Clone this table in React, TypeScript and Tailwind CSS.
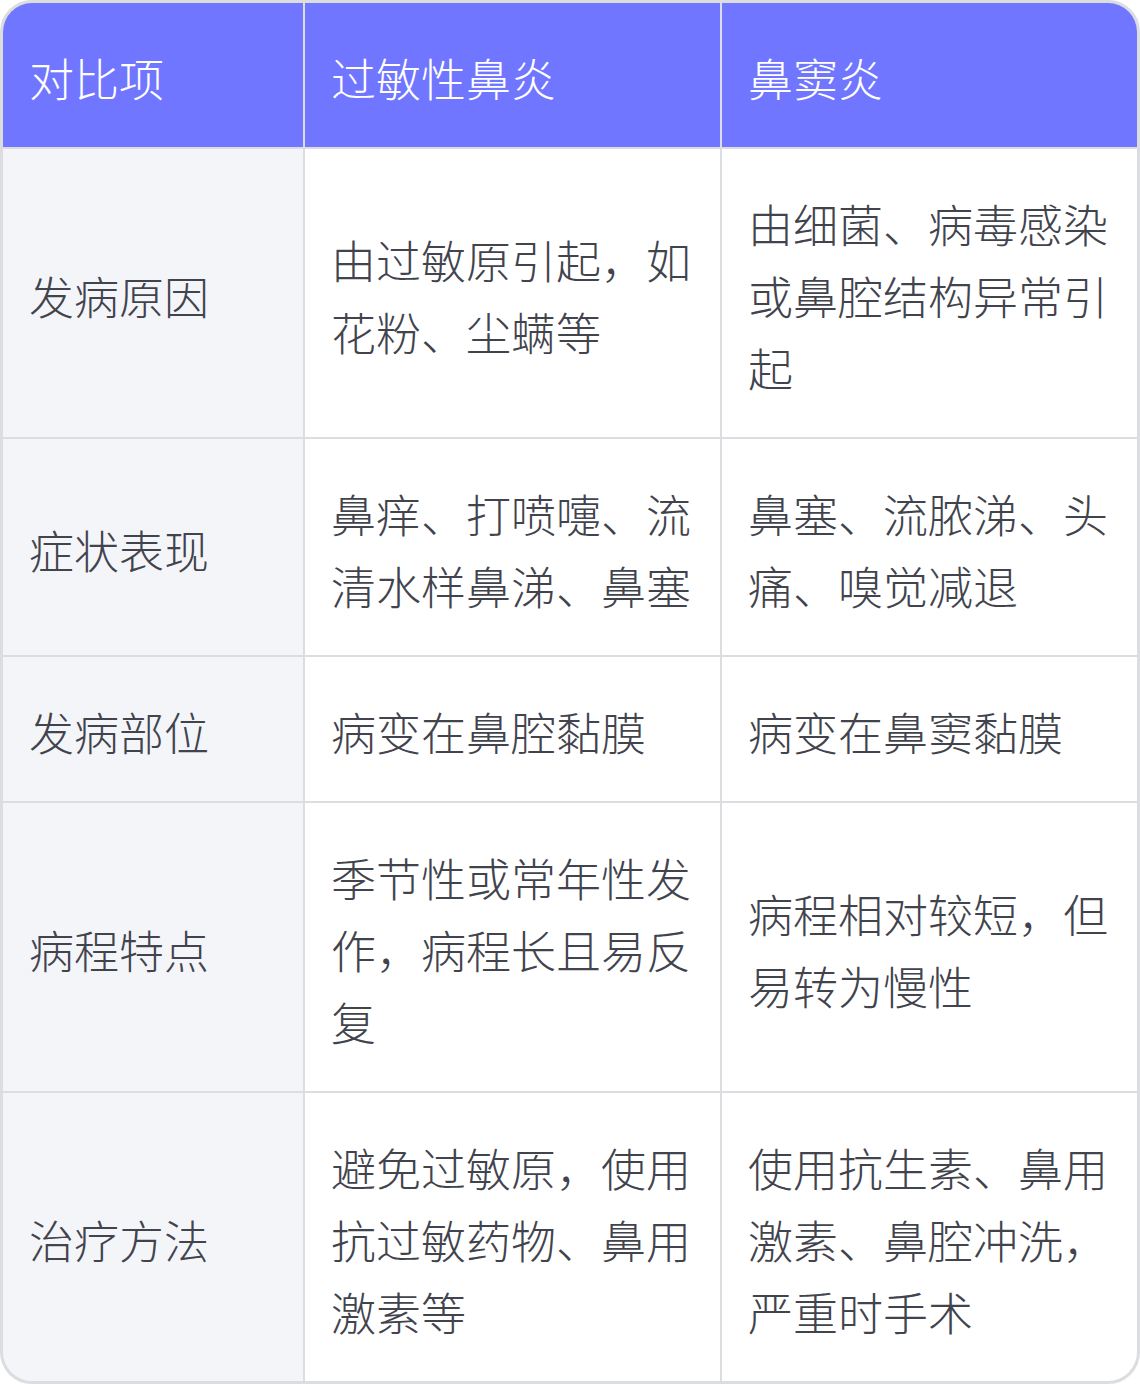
const headers = ['对比项', '过敏性鼻炎', '鼻窦炎'];

const rows: [string, string, string][] = [
  ['发病原因', '由过敏原引起，如花粉、尘螨等', '由细菌、病毒感染或鼻腔结构异常引起'],
  ['症状表现', '鼻痒、打喷嚏、流清水样鼻涕、鼻塞', '鼻塞、流脓涕、头痛、嗅觉减退'],
  ['发病部位', '病变在鼻腔黏膜', '病变在鼻窦黏膜'],
  ['病程特点', '季节性或常年性发作，病程长且易反复', '病程相对较短，但易转为慢性'],
  ['治疗方法', '避免过敏原，使用抗过敏药物、鼻用激素等', '使用抗生素、鼻用激素、鼻腔冲洗，严重时手术'],
];

const cell = 'pl-[26px] pr-[28px] pt-[39px] pb-[33px] flex items-center';

export default function App() {
  return (
    <div className="w-[1140px] h-[1384px] bg-white">
      <div
        className="grid grid-cols-[300px_415px_415px] gap-[2px] bg-[#dcdde1] border-[3px] border-[#dcdde1] rounded-[32px] overflow-hidden text-[45px] leading-[72px] font-light"
        style={{ fontFamily: '"Noto Sans CJK SC", "Noto Sans", sans-serif' }}
      >
        {headers.map((h) => (
          <div key={h} className={`bg-[#7076ff] text-white ${cell}`}>
            {h}
          </div>
        ))}
        {rows.map((r) => (
          <>
            <div key={r[0]} className={`bg-[#f4f5f9] text-[#41434d] ${cell}`}>
              {r[0]}
            </div>
            <div className={`bg-white text-[#41434d] ${cell}`}>{r[1]}</div>
            <div className={`bg-white text-[#41434d] ${cell}`}>{r[2]}</div>
          </>
        ))}
      </div>
    </div>
  );
}
